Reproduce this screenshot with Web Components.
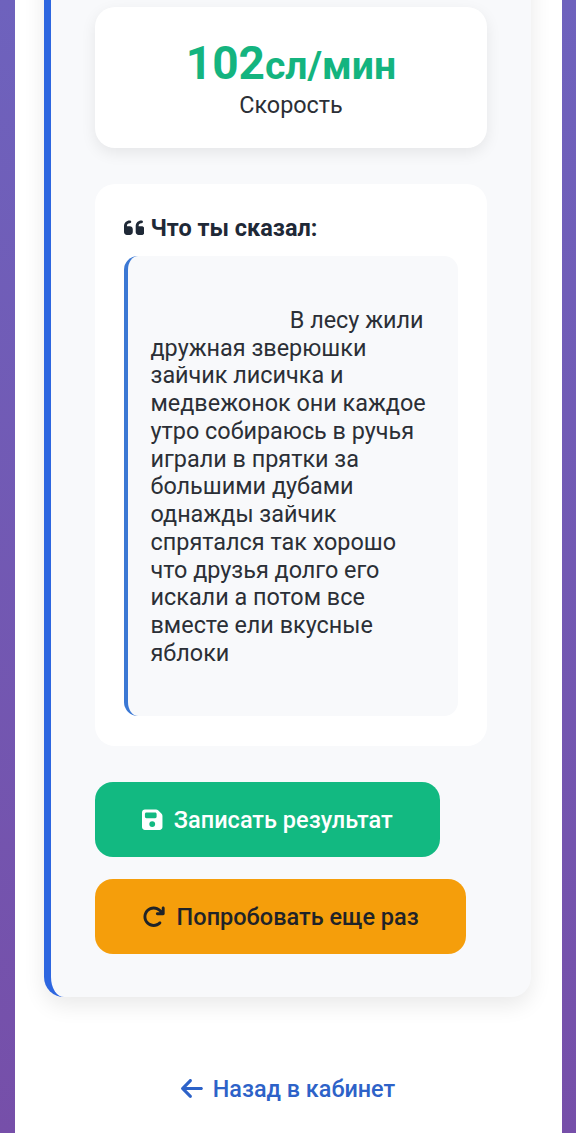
<!doctype html>
<html lang="ru"><head><meta charset="utf-8">
<style>
html,body{margin:0;height:100%;overflow:hidden}
body{background:linear-gradient(180deg,#6e62bd 0%,#764fa9 100%);font-family:Roboto,"Liberation Sans",sans-serif}
</style></head><body>
<page-shell>
  <result-card>
    <stat-card value="102" unit="сл/мин" label="Скорость"></stat-card>
    <transcript-card heading="Что ты сказал:">
                        В лесу жили дружная зверюшки зайчик лисичка и медвежонок они каждое утро собираюсь в ручья играли в прятки за большими дубами однажды зайчик спрятался так хорошо что друзья долго его искали а потом все вместе ели вкусные яблоки
</transcript-card>
    <action-button kind="save" tone="green" width="345">Записать результат</action-button>
    <action-button kind="redo" tone="amber" width="371">Попробовать еще раз</action-button>
  </result-card>
  <back-link>Назад в кабинет</back-link>
</page-shell>
<script>
const ICONS={
 quote:['0 0 448 512','M0 216C0 149.7 53.7 96 120 96h8c17.7 0 32 14.3 32 32s-14.3 32-32 32h-8c-30.9 0-56 25.1-56 56v8h64c35.3 0 64 28.7 64 64v64c0 35.3-28.7 64-64 64H64c-35.3 0-64-28.7-64-64V216zm256 0c0-66.3 53.7-120 120-120h8c17.7 0 32 14.3 32 32s-14.3 32-32 32h-8c-30.9 0-56 25.1-56 56v8h64c35.3 0 64 28.7 64 64v64c0 35.3-28.7 64-64 64H320c-35.3 0-64-28.7-64-64V216z'],
 save:['0 0 448 512','M64 32C28.7 32 0 60.7 0 96V416c0 35.3 28.7 64 64 64H384c35.3 0 64-28.7 64-64V173.3c0-17-6.7-33.3-18.7-45.3L352 50.7C340 38.7 323.7 32 306.7 32H64zm0 96c0-17.7 14.3-32 32-32H288c17.7 0 32 14.3 32 32v64c0 17.7-14.3 32-32 32H96c-17.7 0-32-14.3-32-32V128zM224 288a64 64 0 1 1 0 128 64 64 0 1 1 0-128z'],
 redo:['0 0 512 512','M386.3 160H336c-17.7 0-32 14.3-32 32s14.3 32 32 32H464c17.7 0 32-14.3 32-32V64c0-17.7-14.3-32-32-32s-32 14.3-32 32v51.2L414.4 97.6c-87.5-87.5-229.3-87.5-316.8 0s-87.5 229.3 0 316.8s229.3 87.5 316.8 0c12.5-12.5 12.5-32.8 0-45.3s-32.8-12.5-45.3 0c-62.5 62.5-163.8 62.5-226.3 0s-62.5-163.8 0-226.3s163.8-62.5 226.3 0L386.3 160z'],
 back:['0 0 448 512','M9.4 233.4c-12.5 12.5-12.5 32.8 0 45.3l160 160c12.5 12.5 32.8 12.5 45.3 0s12.5-32.8 0-45.3L109.2 288 416 288c17.7 0 32-14.3 32-32s-14.3-32-32-32l-306.7 0L214.6 118.6c12.5-12.5 12.5-32.8 0-45.3s-32.8-12.5-45.3 0l-160 160z']};
const icon=(n,h)=>{const[v,d]=ICONS[n];const[, ,w,ht]=v.split(' ').map(Number);return `<svg viewBox="${v}" height="${h}" width="${h*w/ht}" fill="currentColor" aria-hidden="true" style="flex:none"><path d="${d}"/></svg>`};
class Base extends HTMLElement{
  render(html){this.attachShadow({mode:'open'}).innerHTML=html}
}
customElements.define('page-shell',class extends Base{connectedCallback(){this.render(`<style>
:host{display:flow-root;width:547px;height:1133px;margin-left:15px;background:#fff;box-sizing:border-box;padding:0 31px 0 29px}
</style><slot></slot>`)}});
customElements.define('result-card',class extends Base{connectedCallback(){this.render(`<style>
:host{display:flex;flex-direction:column;align-items:flex-start;box-sizing:border-box;width:487px;height:1037px;margin-top:-40px;padding:47px 44px 44px 44px;background:#f8f9fb;border-left:7px solid #2d66e0;border-radius:20px;box-shadow:0 8px 22px rgba(0,0,0,.09)}
::slotted(*){flex:none}
</style><slot></slot>`)}});
customElements.define('stat-card',class extends Base{connectedCallback(){this.render(`<style>
:host{display:block;width:392px;height:141px;box-sizing:border-box;padding:30px 0 0;background:#fff;border-radius:20px;text-align:center;box-shadow:0 5px 15px rgba(0,0,0,.08);margin-bottom:36px}
.v{font-size:46px;line-height:52px;font-weight:700;color:#14b47f}
.v small{font-size:39.2px}
.l{font-size:23.4px;line-height:28px;color:#2b2f36;margin-top:-1px}
</style><div class="v">${this.getAttribute('value')}<small>${this.getAttribute('unit')}</small></div><div class="l">${this.getAttribute('label')}</div>`)}});
customElements.define('transcript-card',class extends Base{connectedCallback(){this.render(`<style>
:host{display:block;width:392px;height:562px;box-sizing:border-box;padding:29px;background:#fff;border-radius:20px;margin-bottom:36px;color:#1f2937}
h3{display:flex;align-items:center;gap:6px;margin:0 0 13px;font-size:23.5px;line-height:30px;font-weight:700;height:30px}
.q{box-sizing:border-box;height:460px;padding:23px 23px 22px 22.5px;background:#f8f9fb;border-left:4px solid #3b78d4;border-radius:14px;font-size:23.4px;line-height:27.75px;white-space:pre-wrap;color:#2b2f36}
</style><h3>${icon('quote',23.4)}<span>${this.getAttribute('heading')}</span></h3><div class="q"><slot></slot></div>`)}});
customElements.define('action-button',class extends Base{connectedCallback(){const g=this.getAttribute('tone')==='green';this.render(`<style>
:host{display:flex;align-items:center;justify-content:center;gap:11px;box-sizing:border-box;width:${this.getAttribute('width')}px;height:75px;border-radius:18px;font-size:23.5px;font-weight:500;background:${g?'#12b981':'#f59e0b'};color:${g?'#fff':'#1f2328'};margin-bottom:22px}
</style>${icon(this.getAttribute('kind'),23.4)}<span><slot></slot></span>`)}});
customElements.define('back-link',class extends Base{connectedCallback(){this.render(`<style>
:host{display:flex;align-items:center;justify-content:center;gap:10px;width:488px;margin-top:78px;height:27px;font-size:23.4px;font-weight:500;color:#2d62c8}
</style>${icon('back',25)}<span><slot></slot></span>`)}});
</script>
</body></html>
